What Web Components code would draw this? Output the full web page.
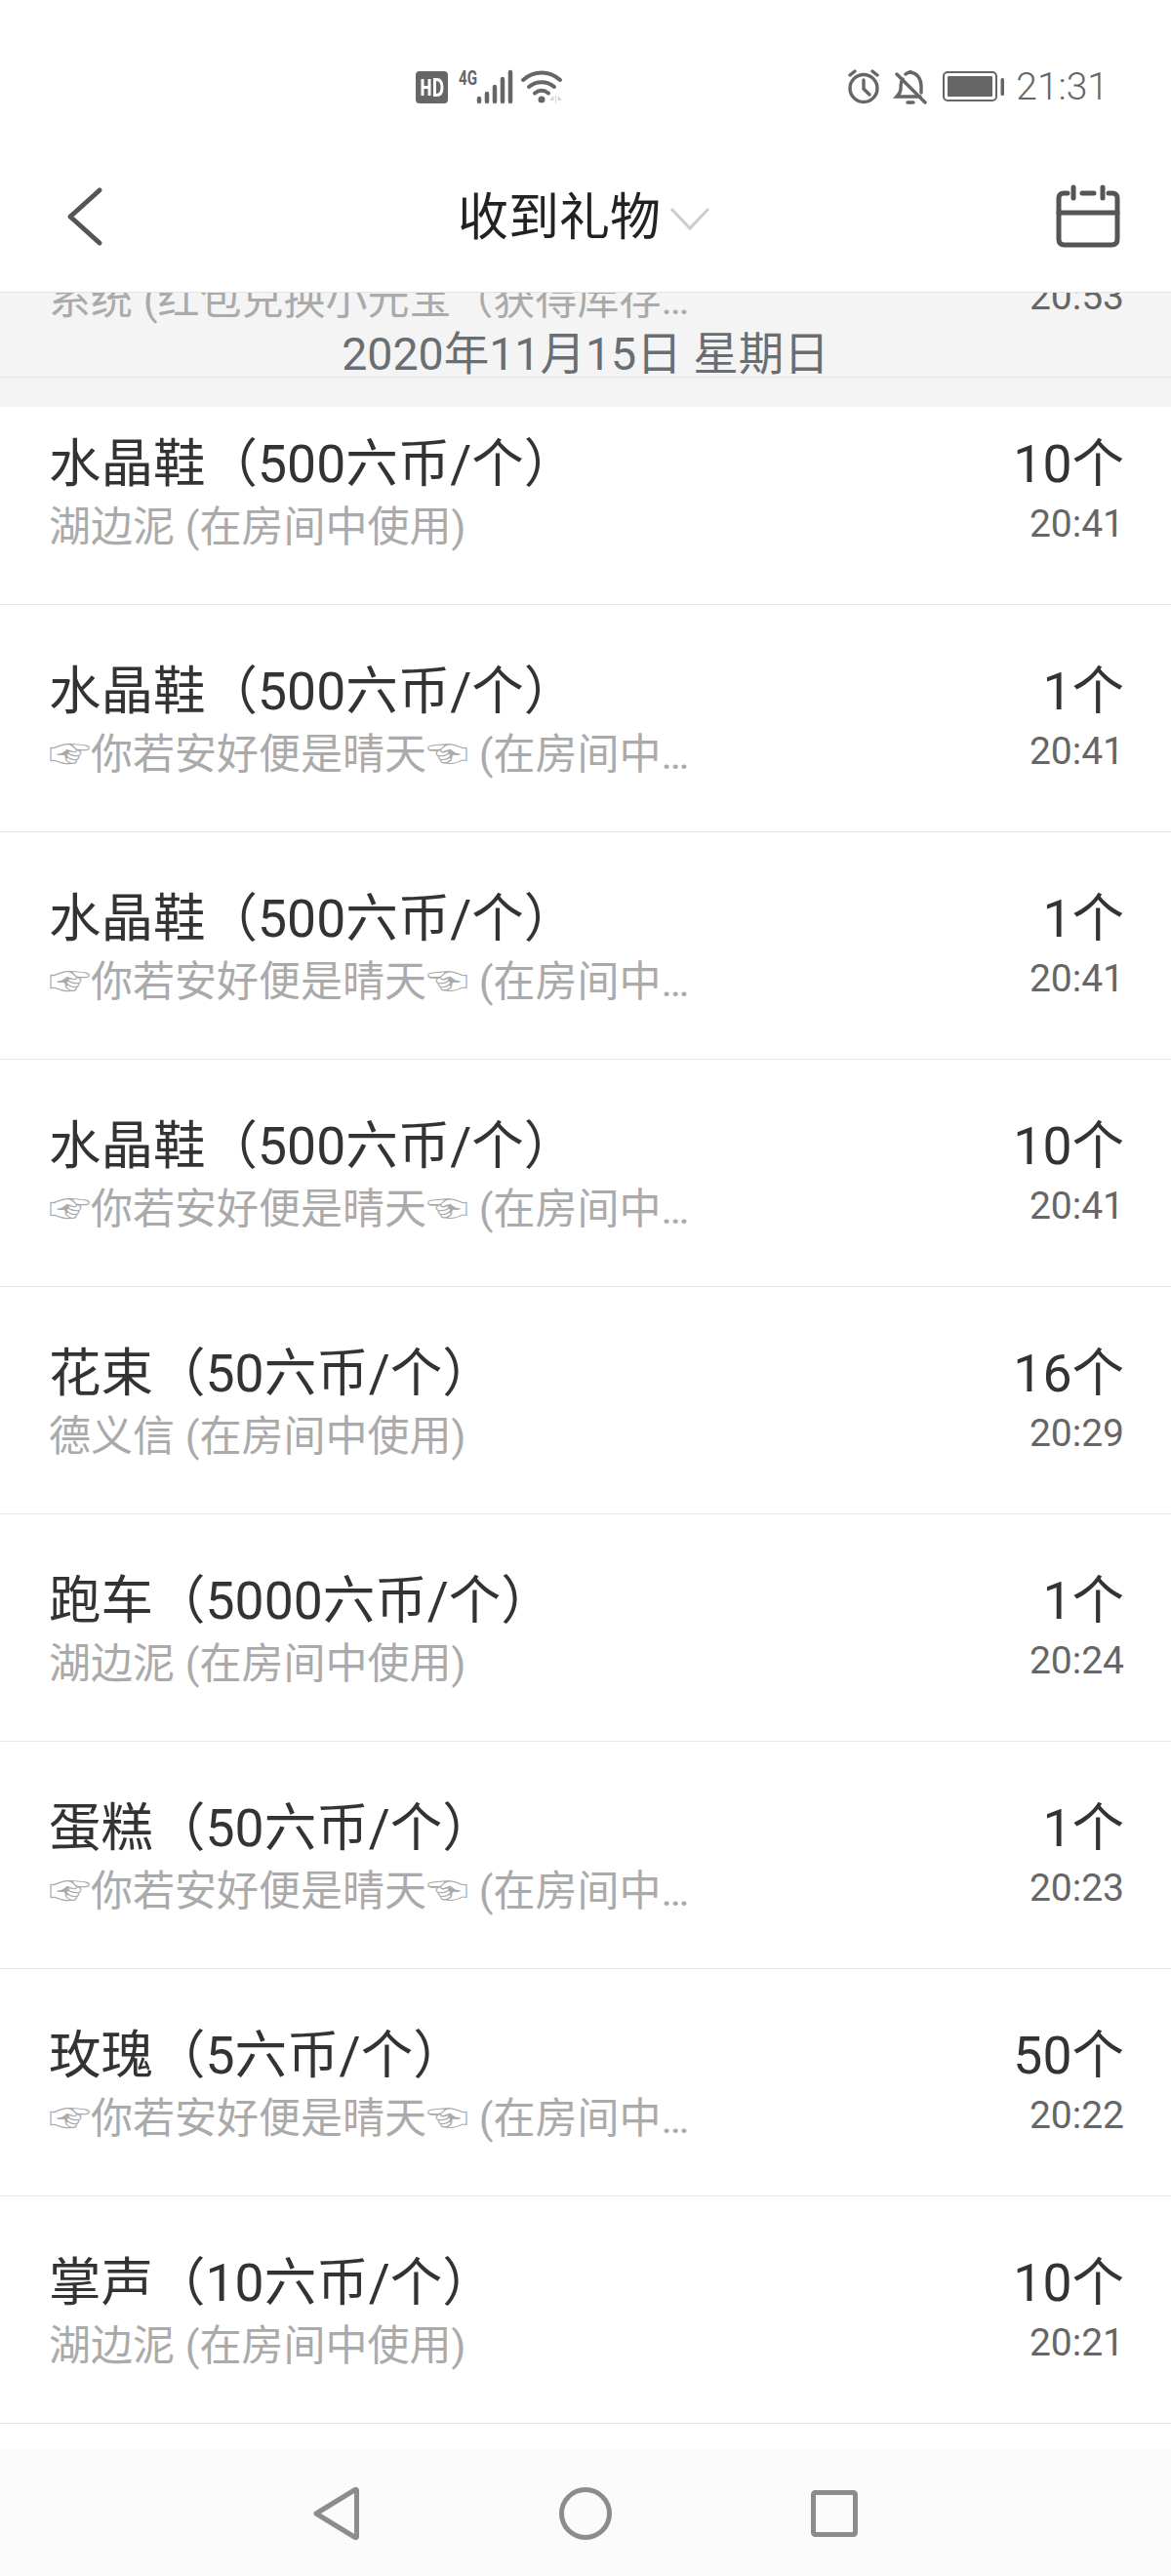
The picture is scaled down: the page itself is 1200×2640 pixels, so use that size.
<!DOCTYPE html>
<html lang="zh-CN">
<head>
<meta charset="utf-8">
<title>收到礼物</title>
<style>
  html, body { margin: 0; padding: 0; background: #fff; }
  body {
    width: 1200px;
    height: 2640px;
    overflow: hidden;
    font-family: Roboto, "Noto Sans CJK SC", "DejaVu Sans", sans-serif;
  }
</style>
</head>
<body>
<app-screen>
  <status-bar slot="top"></status-bar>
  <title-bar slot="top">收到礼物</title-bar>

  <gift-list>
    <gift-row scrolled>
      <span slot="sub">系统 (红包兑换小元宝（获得库存小元宝）)</span>
      <span slot="time">20:53</span>
    </gift-row>
    <date-header>2020年11月15日 星期日</date-header>
    <gift-row first>
      <span slot="title">水晶鞋（500六币/个）</span>
      <span slot="sub">湖边泥 (在房间中使用)</span>
      <span slot="count">10个</span>
      <span slot="time">20:41</span>
    </gift-row>
    <gift-row>
      <span slot="title">水晶鞋（500六币/个）</span>
      <span slot="sub">☞你若安好便是晴天☜ (在房间中使用)</span>
      <span slot="count">1个</span>
      <span slot="time">20:41</span>
    </gift-row>
    <gift-row>
      <span slot="title">水晶鞋（500六币/个）</span>
      <span slot="sub">☞你若安好便是晴天☜ (在房间中使用)</span>
      <span slot="count">1个</span>
      <span slot="time">20:41</span>
    </gift-row>
    <gift-row>
      <span slot="title">水晶鞋（500六币/个）</span>
      <span slot="sub">☞你若安好便是晴天☜ (在房间中使用)</span>
      <span slot="count">10个</span>
      <span slot="time">20:41</span>
    </gift-row>
    <gift-row>
      <span slot="title">花束（50六币/个）</span>
      <span slot="sub">德义信 (在房间中使用)</span>
      <span slot="count">16个</span>
      <span slot="time">20:29</span>
    </gift-row>
    <gift-row>
      <span slot="title">跑车（5000六币/个）</span>
      <span slot="sub">湖边泥 (在房间中使用)</span>
      <span slot="count">1个</span>
      <span slot="time">20:24</span>
    </gift-row>
    <gift-row>
      <span slot="title">蛋糕（50六币/个）</span>
      <span slot="sub">☞你若安好便是晴天☜ (在房间中使用)</span>
      <span slot="count">1个</span>
      <span slot="time">20:23</span>
    </gift-row>
    <gift-row>
      <span slot="title">玫瑰（5六币/个）</span>
      <span slot="sub">☞你若安好便是晴天☜ (在房间中使用)</span>
      <span slot="count">50个</span>
      <span slot="time">20:22</span>
    </gift-row>
    <gift-row>
      <span slot="title">掌声（10六币/个）</span>
      <span slot="sub">湖边泥 (在房间中使用)</span>
      <span slot="count">10个</span>
      <span slot="time">20:21</span>
    </gift-row>
  </gift-list>

  <nav-keys slot="bottom"></nav-keys>
</app-screen>

<script>
// Page frame: fixed top bars, scrolling list in the middle, system keys below
class AppScreen extends HTMLElement {
  constructor() {
    super();
    this.attachShadow({ mode: 'open' });
    this.shadowRoot.innerHTML = `
      <style>
        :host {
          display: flex;
          flex-direction: column;
          width: 1200px;
          height: 2640px;
          background: #fff;
        }
        main { flex: 1; min-height: 0; display: flex; }
      </style>
      <slot name="top"></slot>
      <main><slot></slot></main>
      <slot name="bottom"></slot>
    `;
  }
}

// Android status bar with the network icons and the clock
class StatusBar extends HTMLElement {
  constructor() {
    super();
    this.attachShadow({ mode: 'open' });
    this.shadowRoot.innerHTML = `
      <style>
        :host {
          display: flex;
          justify-content: space-between;
          align-items: flex-start;
          box-sizing: border-box;
          height: 145px;
          padding: 71px 64px 0 426px;
          color: #666;
        }
        .group { display: flex; align-items: center; height: 36px; }
        svg { display: block; }
        .net { margin-top: -6px; }
        .clock {
          font: 300 39px/38px Roboto, sans-serif;
          color: #666;
          margin-left: 12px;
        }
      </style>
      <div class="group">
        <svg class="net" width="152" height="42" viewBox="0 -6 152 42">
          <rect x="0" y="2" width="33" height="33" rx="4" fill="#666"/>
          <path d="M7 10v17M7 18.500h7M14 10v17" fill="none" stroke="#fff" stroke-width="3"/>
          <path d="M19.500 10.500v16h2c4 0 5.500-3 5.500-8s-1.500-8-5.500-8z" fill="none" stroke="#fff" stroke-width="3"/>
          <text x="44" y="16" font-family="Roboto, sans-serif" font-size="20" font-weight="700" fill="#666" textLength="19" lengthAdjust="spacingAndGlyphs">4G</text>
          <g stroke="#666" stroke-width="4.500" stroke-linecap="round" fill="none">
            <path d="M65 30v3M73 25v8M81 18v15M89 10v23M97 3v30"/>
          </g>
          <g fill="none" stroke="#666" stroke-width="4" stroke-linecap="round">
            <path d="M110 11c11-10 27-10 38 0"/>
            <path d="M116 18c7.500-6.500 18.500-6.500 26 0"/>
            <path d="M122 24.500c4.500-3.500 9.500-3.500 14 0"/>
          </g>
          <circle cx="129" cy="31" r="3.500" fill="#666"/>
          <path d="M141 28l-3 3.500h3zM143.500 27v8M146 28l3 3.500h-3z" fill="#d4d4d4" stroke="#d4d4d4" stroke-width="1"/>
        </svg>
      </div>
      <div class="group">
        <svg width="161" height="36" viewBox="0 0 161 36">
          <g fill="none" stroke="#666" stroke-width="3.400" stroke-linecap="round">
            <circle cx="17" cy="19.500" r="14"/>
            <path d="M17 11v9l6 6"/>
            <path d="M3 6l5-4M31 6l-5-4"/>
            <path d="M51 5l29 29"/>
            <path d="M57 10c-2 3-2 6-2 10c0 4-2 6-4 8h24M60 5c1-1 3-2 5-2c7 1 11 7 11 14v7"/>
            <path d="M62 34h6"/>
          </g>
          <circle cx="65" cy="3" r="2" fill="#666"/>
          <rect x="99" y="3" width="54" height="29" rx="4" fill="#fff" stroke="#666" stroke-width="2"/>
          <rect x="103" y="7" width="46" height="21" rx="1" fill="#666"/>
          <rect x="157.500" y="9" width="3.500" height="18" rx="1.500" fill="#666"/>
        </svg>
        <span class="clock">21:31</span>
      </div>
    `;
  }
}

// Title bar: back arrow, centred title with dropdown chevron, calendar button
class TitleBar extends HTMLElement {
  constructor() {
    super();
    this.attachShadow({ mode: 'open' });
    this.shadowRoot.innerHTML = `
      <style>
        :host {
          display: flex;
          align-items: center;
          justify-content: space-between;
          box-sizing: border-box;
          height: 155px;
          padding: 0 52px 1px 66px;
          border-bottom: 1px solid #e4e4e4;
        }
        svg { display: block; }
        .title {
          display: flex;
          align-items: center;
          gap: 9px;
          margin-left: 7px;
          padding-top: 5px;
          font-size: 52px;
          line-height: 64px;
          color: #222;
        }
      </style>
      <svg width="42" height="66" viewBox="0 0 42 66">
        <path d="M36 6L6 33l30 27" fill="none" stroke="#555" stroke-width="5" stroke-linecap="round" stroke-linejoin="round"/>
      </svg>
      <div class="title">
        <slot></slot>
        <svg width="42" height="28" viewBox="0 0 42 28">
          <path d="M2 4l19 20L40 4" fill="none" stroke="#ccc" stroke-width="3"/>
        </svg>
      </div>
      <svg width="66" height="66" viewBox="0 0 66 66">
        <g fill="none" stroke="#555" stroke-width="5" stroke-linecap="round">
          <path d="M12 9H8c-3 0-5 2-5 5v42c0 4 2 6 6 6h48c4 0 6-2 6-6V14c0-3-2-5-5-5h-4"/>
          <path d="M3 29h60"/>
          <path d="M18 3v11M48 3v11M27 9h12"/>
        </g>
      </svg>
    `;
  }
}

// Scrolled list; the negative margin is the current scroll offset
class GiftList extends HTMLElement {
  constructor() {
    super();
    this.attachShadow({ mode: 'open' });
    this.shadowRoot.innerHTML = `
      <style>
        :host {
          display: block;
          flex: 1;
          overflow: hidden;
          background: #fff;
        }
        .scroll { margin-top: -146px; }
      </style>
      <div class="scroll"><slot></slot></div>
    `;
  }
}

// One gift record: name and sender on the left, count and time on the right
class GiftRow extends HTMLElement {
  constructor() {
    super();
    this.attachShadow({ mode: 'open' });
    this.shadowRoot.innerHTML = `
      <style>
        :host {
          display: flex;
          justify-content: space-between;
          box-sizing: border-box;
          height: 233px;
          padding: 57px 48px 0 50px;
          border-bottom: 1px solid #e6e6e6;
          background: #fff;
        }
        /* row half hidden under the date header */
        :host([scrolled]) { background: #f4f4f4; }
        :host([first]) { height: 203px; padding-top: 27px; }
        .left { min-width: 0; }
        .right { text-align: right; }
        .title, .count {
          min-height: 64px;
          font-size: 53.5px;
          line-height: 64px;
          color: #333;
          white-space: nowrap;
        }
        .sub {
          max-width: 676px;
          margin-top: 1px;
          font-size: 43px;
          line-height: 62px;
          color: #aaa;
          white-space: nowrap;
          overflow: hidden;
          text-overflow: ellipsis;
        }
        .time {
          font-size: 39px;
          line-height: 58px;
          color: #666;
        }
      </style>
      <div class="left">
        <div class="title"><slot name="title"></slot></div>
        <div class="sub"><slot name="sub"></slot></div>
      </div>
      <div class="right">
        <div class="count"><slot name="count"></slot></div>
        <div class="time"><slot name="time"></slot></div>
      </div>
    `;
  }
}

// Sticky day heading, its label lies over the row that scrolled under it
class DateHeader extends HTMLElement {
  constructor() {
    super();
    this.attachShadow({ mode: 'open' });
    this.shadowRoot.innerHTML = `
      <style>
        :host {
          display: block;
          position: relative;
          height: 30px;
          background: #f4f4f4;
        }
        .label {
          position: absolute;
          left: 0;
          right: 0;
          bottom: 30px;
          transform: translateY(6px);
          text-align: center;
          font-size: 46.500px;
          line-height: 60px;
          color: #696e73;
        }
      </style>
      <div class="label"><slot></slot></div>
    `;
  }
}

// Android back / home / recents keys
class NavKeys extends HTMLElement {
  constructor() {
    super();
    this.attachShadow({ mode: 'open' });
    this.shadowRoot.innerHTML = `
      <style>
        :host {
          display: flex;
          align-items: center;
          box-sizing: border-box;
          height: 130px;
          padding: 1px 321px 0 320px;
          justify-content: space-between;
          background: #fbfbfb;
        }
        svg { display: block; }
      </style>
      <svg width="48" height="58" viewBox="0 0 48 58">
        <path d="M44 4.500L4 29l40 24.500c1 .5 1.500 0 1.500-1V5.500c0-1-.5-1.500-1.500-1z" fill="none" stroke="#8c8c8c" stroke-width="5" stroke-linejoin="round"/>
      </svg>
      <svg width="54" height="58" viewBox="0 0 54 58">
        <circle cx="27" cy="29" r="24.500" fill="none" stroke="#8c8c8c" stroke-width="5"/>
      </svg>
      <svg width="48" height="48" viewBox="0 0 48 48">
        <rect x="2.500" y="2.500" width="43" height="43" rx="2" fill="none" stroke="#8c8c8c" stroke-width="5"/>
      </svg>
    `;
  }
}

customElements.define('app-screen', AppScreen);
customElements.define('status-bar', StatusBar);
customElements.define('title-bar', TitleBar);
customElements.define('gift-list', GiftList);
customElements.define('gift-row', GiftRow);
customElements.define('date-header', DateHeader);
customElements.define('nav-keys', NavKeys);
</script>
</body>
</html>
